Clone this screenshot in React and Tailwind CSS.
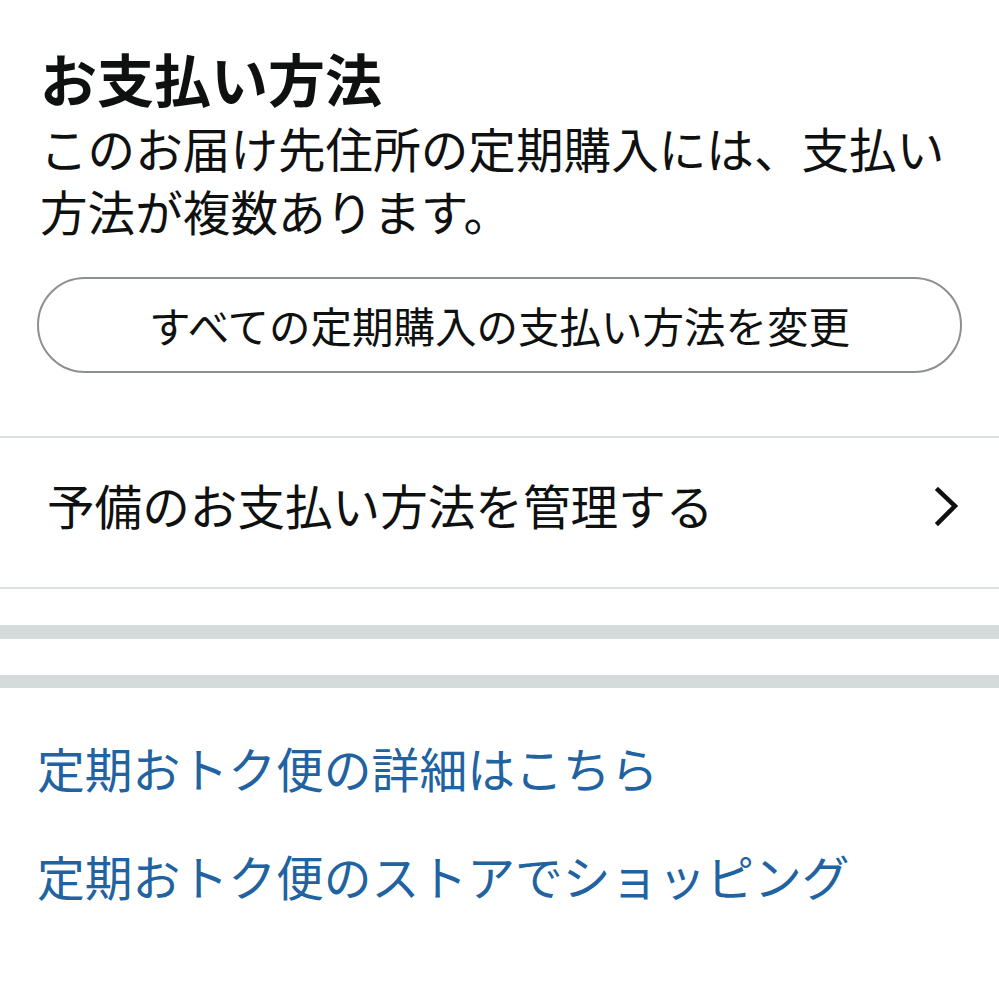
const JP = { fontFamily: '"Noto Sans CJK JP", "Noto Sans", sans-serif' };

function Chevron() {
    return (
        <svg width="26" height="40" viewBox="0 0 26 40" fill="none" className="shrink-0 -mt-[12px]">
            <polyline points="5,3 22,19 5,36" stroke="#0f1111" strokeWidth="4.5" strokeLinecap="square" strokeLinejoin="miter" />
        </svg>
    );
}

export default function App() {
    return (
        <div className="w-[999px] min-h-[993px] bg-white text-[#0f1111]" style={JP}>
            {/* Payment section */}
            <div className="px-[37px] pt-[43px]">
                <h1 className="ml-[3px] text-[57px] leading-[68px] font-bold">お支払い方法</h1>
                <p className="ml-[3px] mr-[3px] mt-[5px] text-[47.6px] leading-[63px]">
                    このお届け先住所の定期購入には、支払い方法が複数あります。
                </p>
                <button className="mt-[35px] w-full h-[96px] rounded-full border-2 border-[#8d9090] bg-white text-[41.5px] text-[#0f1111] flex items-center justify-center">
                    すべての定期購入の支払い方法を変更
                </button>
            </div>

            {/* Backup payment row */}
            <div className="mt-[63px] border-t-2 border-b-2 border-[#dcdfdf] h-[153px] pl-[47px] pr-[40px] flex items-center justify-between">
                <span className="text-[47.6px] leading-[60px] -mt-[16px]">予備のお支払い方法を管理する</span>
                <Chevron />
            </div>

            <div className="mt-[36px] h-[14px] bg-[#d5dbdb]" />
            <div className="mt-[36px] h-[13px] bg-[#d5dbdb]" />

            {/* Links */}
            <div className="px-[37px] pt-[50px] flex flex-col gap-[48px] text-[#2162a1] text-[47.8px] leading-[60px]">
                <a href="#">定期おトク便の詳細はこちら</a>
                <a href="#">定期おトク便のストアでショッピング</a>
            </div>
        </div>
    );
}
